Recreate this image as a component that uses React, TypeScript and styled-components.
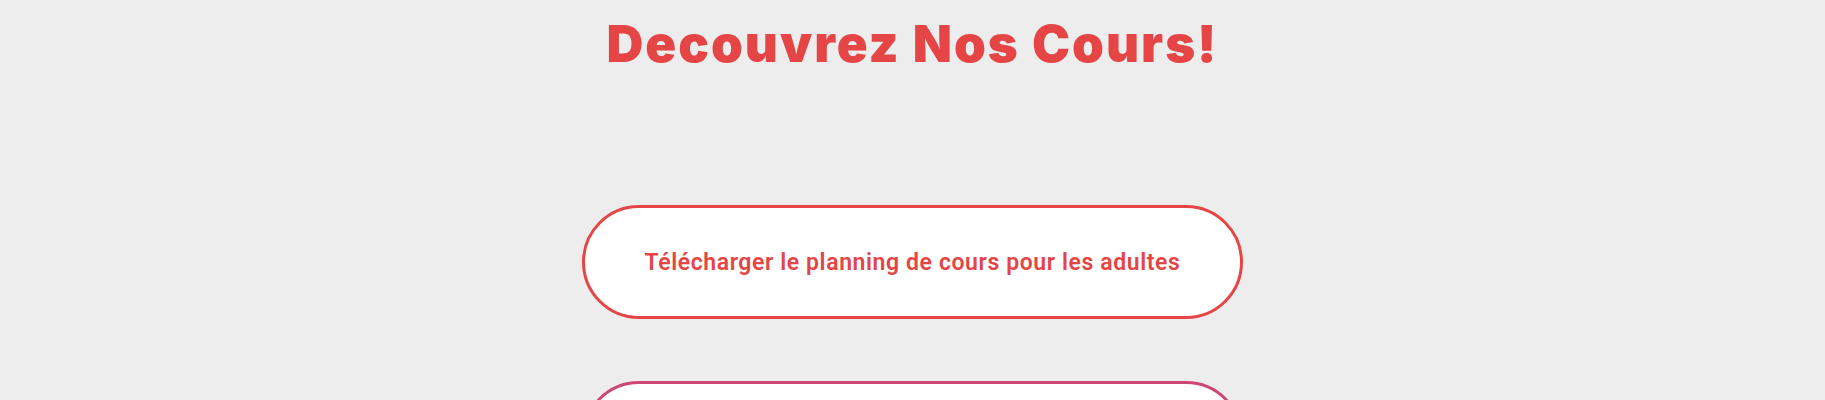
import React from "react";
import styled, { createGlobalStyle } from "styled-components";

const Global = createGlobalStyle`
  html, body { margin: 0; padding: 0; background: #ededed; }
  body { font-family: "Inter", "Liberation Sans", sans-serif; }
`;

const Page = styled.main`
  display: flex;
  flex-direction: column;
  align-items: center;
  padding-top: 14px;
`;

const Title = styled.h2`
  margin: 0;
  font-family: "Inter", "Liberation Sans", sans-serif;
  font-weight: 900;
  font-size: 51px;
  line-height: 60px;
  letter-spacing: 2px;
  color: #e54545;
`;

const ButtonList = styled.div`
  display: flex;
  flex-direction: column;
  align-items: center;
  gap: 62px;
  margin-top: 131px;
`;

const PillButton = styled.a<{ $color: string }>`
  box-sizing: border-box;
  width: 661px;
  height: 114px;
  display: flex;
  align-items: center;
  justify-content: center;
  background: #ffffff;
  border: 3px solid ${(p) => p.$color};
  border-radius: 57px;
  color: ${(p) => p.$color};
  font-family: "Roboto", "Liberation Sans", sans-serif;
  font-weight: 600;
  font-size: 23px;
  letter-spacing: 0.6px;
  text-decoration: none;
  cursor: pointer;
`;

export default function App() {
  return (
    <>
      <Global />
      <Page>
        <Title>Decouvrez Nos Cours!</Title>
        <ButtonList>
          <PillButton $color="#e54545">
            Télécharger le planning de cours pour les adultes
          </PillButton>
          <PillButton $color="#cc4775">
            Télécharger le planning de cours pour les enfants
          </PillButton>
        </ButtonList>
      </Page>
    </>
  );
}
